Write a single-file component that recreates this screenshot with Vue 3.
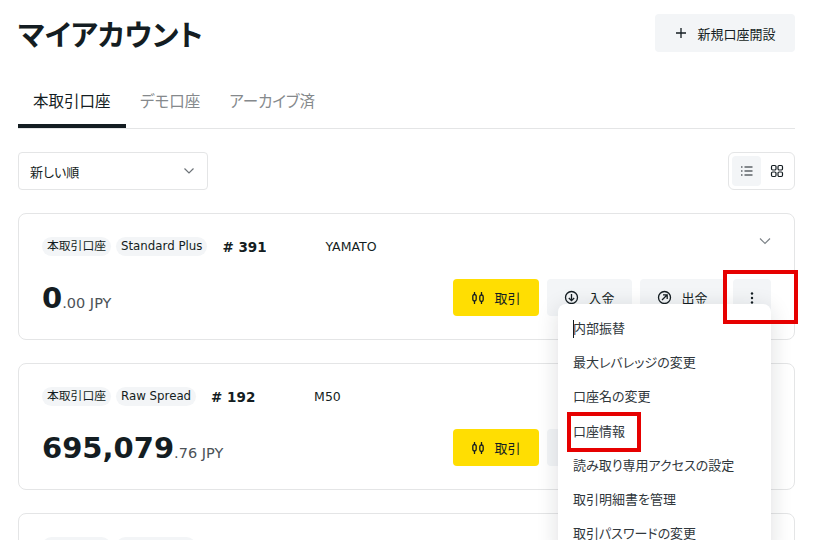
<template>
  <div class="page">
    <header class="head">
      <h1 class="title">マイアカウント</h1>
      <button class="btn new-btn">
        <svg width="14" height="14" viewBox="0 0 14 14"><path d="M7 2v10M2 7h10" stroke="#141d22" stroke-width="1.3" fill="none" /></svg>
        <span>新規口座開設</span>
      </button>
    </header>

    <nav class="tabs">
      <div v-for="(t, i) in tabs" :key="t" class="tab" :class="{ active: i === 0 }">{{ t }}</div>
    </nav>

    <div class="filters">
      <div class="select">
        <span>新しい順</span>
        <svg width="12" height="8" viewBox="0 0 12 8"><path d="M1.5 1.5 6 6l4.500-4.500" stroke="#6d7378" stroke-width="1.200" fill="none" /></svg>
      </div>
      <div class="view-toggle">
        <div class="view-btn on">
          <svg width="14" height="14" viewBox="0 0 14 14" fill="none" stroke="#141d22" stroke-width="1.200"><path d="M4.500 3h8M4.500 7h8M4.500 11h8M1 3h1.500M1 7h1.500M1 11h1.500" /></svg>
        </div>
        <div class="view-btn">
          <svg width="14" height="14" viewBox="0 0 14 14" fill="none" stroke="#141d22" stroke-width="1.200"><rect x="1.500" y="1.500" width="4.500" height="4.500" rx="1.200" /><rect x="8" y="1.500" width="4.500" height="4.500" rx="1.200" /><rect x="1.500" y="8" width="4.500" height="4.500" rx="1.200" /><rect x="8" y="8" width="4.500" height="4.500" rx="1.200" /></svg>
        </div>
      </div>
    </div>

    <section v-for="(a, idx) in accounts" :key="idx" class="card">
      <div class="card-top">
        <span class="pill">本取引口座</span>
        <span class="pill">{{ a.type }}</span>
        <span class="num" :style="{ width: a.numWidth + 'px' }">{{ a.num }}</span>
        <span class="name" :style="{ marginLeft: a.nameGap + 'px' }">{{ a.name }}</span>
        <svg class="chev" width="12" height="8" viewBox="0 0 12 8"><path d="M1 1.500 6 6.500l5-5" stroke="#7d8388" stroke-width="1.200" fill="none" /></svg>
      </div>
      <div class="card-bottom">
        <div class="balance"><b>{{ a.whole }}</b><span>.{{ a.cents }} JPY</span></div>
        <div class="actions">
          <button class="btn trade">
            <svg width="14" height="14" viewBox="0 0 14 14" fill="none" stroke="#141d22" stroke-width="1.300"><path d="M3.500 1v2.500M3.500 10v3M10.500 1v3M10.500 10.500V13" /><rect x="1.800" y="3.500" width="3.400" height="6.500" rx="1.700" /><rect x="8.800" y="4" width="3.400" height="6.500" rx="1.700" /></svg>
            <span>取引</span>
          </button>
          <button class="btn side">
            <svg width="15" height="15" viewBox="0 0 15 15" fill="none" stroke="#141d22" stroke-width="1.300"><circle cx="7.500" cy="7.500" r="6" /><path d="M7.500 4v6.500M4.800 8l2.700 2.700L10.200 8" /></svg>
            <span>入金</span>
          </button>
          <button class="btn side">
            <svg width="15" height="15" viewBox="0 0 15 15" fill="none" stroke="#141d22" stroke-width="1.300"><circle cx="7.500" cy="7.500" r="6" /><path d="M5 10l5-5M6 4.800h4.200V9" /></svg>
            <span>出金</span>
          </button>
          <div class="more-wrap">
            <button class="btn more">
              <svg width="4" height="14" viewBox="0 0 4 14" fill="#141d22"><circle cx="2" cy="2.500" r="1.200" /><circle cx="2" cy="7" r="1.200" /><circle cx="2" cy="11.500" r="1.200" /></svg>
            </button>
            <ul v-if="idx === 0" class="menu">
              <li v-for="(m, i) in menuItems" :key="m">
                <i v-if="i === 0" class="caret"></i>{{ m }}
                <i v-if="m === '口座情報'" class="mark mark-item"></i>
              </li>
            </ul>
            <i v-if="idx === 0" class="mark mark-more"></i>
          </div>
        </div>
      </div>
    </section>
  </div>
</template>

<script setup>
const tabs = ['本取引口座', 'デモ口座', 'アーカイブ済']
const menuItems = ['内部振替', '最大レバレッジの変更', '口座名の変更', '口座情報', '読み取り専用アクセスの設定', '取引明細書を管理', '取引パスワードの変更']
const accounts = [
  { type: 'Standard Plus', num: '# 391', numWidth: 44, nameGap: 54, name: 'YAMATO', whole: '0', cents: '00' },
  { type: 'Raw Spread', num: '# 1920', numWidth: 44, nameGap: 54, name: 'M50', whole: '695,079', cents: '76' },
  { type: 'Raw Spread', num: '# 1920', numWidth: 44, nameGap: 54, name: '', whole: '0', cents: '00' }
]
</script>

<style>
html, body { background: #fff; }
</style>

<style scoped>
.page {
  width: 823px; height: 540px; overflow: hidden; box-sizing: border-box;
  padding: 14px 28px 0 18px; background: #fff; color: #141d22;
  font-family: "DejaVu Sans", "Noto Sans CJK JP", sans-serif;
  font-feature-settings: "palt";
}
.head { display: flex; justify-content: space-between; align-items: center; height: 38px; }
.title { margin: 0; font-family: "Noto Sans CJK JP", sans-serif; font-size: 29px; font-weight: 700; line-height: 38px; }
.btn {
  display: flex; align-items: center; justify-content: center; gap: 9px; height: 37px; padding: 0;
  border: 0; border-radius: 4px; background: #f3f5f7; color: #141d22;
  font-family: inherit; font-feature-settings: inherit; font-size: 13px;
}
.new-btn { width: 140px; height: 38px; }
.tabs { display: flex; margin-top: 28px; height: 48px; border-bottom: 1px solid #e4e5e6; box-sizing: content-box; }
.tab { padding: 0 15px; line-height: 44px; height: 48px; box-sizing: border-box; font-size: 15.500px; color: #85898c; }
.tab + .tab { padding: 0 15px 0 14px; }
.tab.active { color: #141d22; border-bottom: 4px solid #141d22; width: 108px; }
.filters { display: flex; justify-content: space-between; margin-top: 23px; }
.select {
  display: flex; align-items: center; justify-content: space-between; box-sizing: border-box;
  width: 190px; height: 38px; padding: 0 12px 0 11px; border: 1px solid #e4e5e6; border-radius: 4px; font-size: 13px;
}
.view-toggle {
  display: flex; gap: 1px; box-sizing: border-box; width: 67px; height: 38px; padding: 3px;
  border: 1px solid #e4e5e6; border-radius: 6px;
}
.view-btn { display: flex; align-items: center; justify-content: center; width: 30px; height: 30px; border-radius: 4px; }
.view-btn.on { background: #f3f5f7; }
.card {
  box-sizing: border-box; height: 127px; margin-top: 23px; padding: 23px;
  border: 1px solid #e4e5e6; border-radius: 8px; display: flex; flex-direction: column; gap: 23px;
}
.filters + .card { margin-top: 23px; }
.card-top { display: flex; align-items: center; height: 19px; gap: 5px; font-size: 12.500px; }
.pill { padding: 0 5px; height: 19px; line-height: 19px; border-radius: 10px; background: #f3f5f7; font-size: 11.800px; white-space: nowrap; }
.num { margin-left: 10px; font-weight: 700; font-size: 13.500px; overflow: hidden; white-space: nowrap; }
.name { font-size: 12.500px; white-space: nowrap; }
.chev { margin-left: auto; margin-top: -11px; }
.card-bottom { display: flex; justify-content: space-between; align-items: center; height: 37px; }
.balance { display: flex; align-items: baseline; }
.balance b { font-size: 29px; font-weight: 700; }
.balance span { font-size: 14.500px; color: #4c5257; }
.actions { display: flex; gap: 8px; }
.trade { width: 86px; background: #ffde02; }
.side { width: 85px; }
.more-wrap { position: relative; }
.more { width: 38px; }
.menu {
  position: absolute; top: 25px; right: 0; z-index: 5; box-sizing: border-box; width: 213px; margin: 0; padding: 8px 0;
  list-style: none; background: #fff; border-radius: 8px; box-shadow: 0 4px 22px rgba(20, 29, 34, .14);
  font-size: 13px;
}
.menu li { position: relative; height: 34.200px; line-height: 34px; padding-left: 15px; white-space: nowrap; color: #30373c; }
.caret { position: absolute; left: 15px; top: 8px; width: 1px; height: 18px; background: #141d22; }
.mark { position: absolute; z-index: 6; border: 4px solid #e60000; box-sizing: border-box; }
.mark-more { left: -10px; top: -9px; width: 75px; height: 54px; }
.mark-item { left: 9px; top: -3px; width: 74px; height: 40px; }
</style>
